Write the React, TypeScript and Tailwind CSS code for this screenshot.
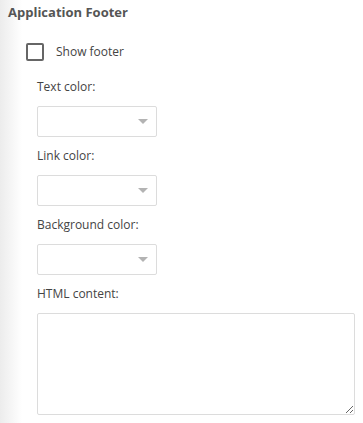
const Caret = () => (
  <svg viewBox="0 0 10 5" className="w-[10px] h-[5px] fill-[#b3b3b3]">
    <path d="M0 0h10L5 5z" />
  </svg>
);

const ColorSelect = () => (
  <div className="w-[120px] h-[31px] border border-[#dcdcdc] rounded-[2px] bg-white flex items-center justify-end pr-[8px] box-border">
    <Caret />
  </div>
);

const Field = ({ label, children }: { label: string; children: React.ReactNode }) => (
  <div className="flex flex-col">
    <label className="text-[12px] leading-[16px] text-[#444]">{label}</label>
    <div className="mt-[11px]">{children}</div>
  </div>
);

export default function App() {
  return (
    <div
      className="w-[363px] h-[423px] bg-[linear-gradient(to_right,#ececec,#ffffff_22px)]"
      style={{ fontFamily: '"Open Sans", "Noto Sans", sans-serif' }}
    >
      <div className="pt-[2px] pl-[8px]">
        <h2 className="text-[13px] font-bold text-[#555] leading-[20px]">Application Footer</h2>
      </div>
      <div className="pl-[26px] mt-[21px] flex items-center">
        <div className="w-[18px] h-[18px] shrink-0 border-2 border-[#666] rounded-[2px] bg-white box-border" />
        <span className="ml-[12px] text-[12px] text-[#444]">Show footer</span>
      </div>
      <div className="pl-[37px] mt-[18px] flex flex-col gap-[11px]">
        <Field label="Text color:">
          <ColorSelect />
        </Field>
        <Field label="Link color:">
          <ColorSelect />
        </Field>
        <Field label="Background color:">
          <ColorSelect />
        </Field>
        <Field label="HTML content:">
          <textarea className="block w-[318px] h-[102px] border border-[#dcdcdc] rounded-[2px] bg-white outline-none resize" />
        </Field>
      </div>
    </div>
  );
}
